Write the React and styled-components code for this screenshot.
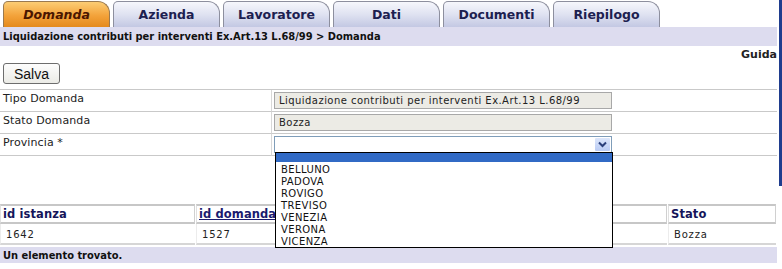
import React from "react";
import styled, { createGlobalStyle } from "styled-components";

const Global = createGlobalStyle`
  html, body { margin: 0; padding: 0; background: #fff; }
  body { font-family: "DejaVu Sans", Verdana, sans-serif; color: #111; }
`;

const Page = styled.div`
  position: relative;
  width: 782px;
  height: 269px;
  overflow: hidden;
  background: #fff;
`;

const TopArea = styled.div`
  border-right: 3px solid #1f3d8e;
  padding-right: 2px;
  padding-bottom: 30px;
`;

const TabBar = styled.div`
  display: flex;
  gap: 3px;
  padding: 1px 0 0 3px;
  height: 26px;
`;

const Tab = styled.div`
  width: 105px;
  height: 25px;
  border: 1px solid ${p => (p.$active ? "#9a7a50" : "#8d8f9e")};
  border-bottom: none;
  border-radius: 5px 12px 0 0;
  background: ${p =>
    p.$active
      ? "linear-gradient(#fccd74, #f3a23a 55%, #e48a1c)"
      : "linear-gradient(#f6f7fc, #dfe2f1 50%, #c3c8e3)"};
  display: flex;
  align-items: center;
  justify-content: center;
  font-weight: bold;
  font-size: 12.5px;
  font-style: ${p => (p.$active ? "italic" : "normal")};
  color: ${p => (p.$active ? "#4a1600" : "#1c2050")};
`;

const Breadcrumb = styled.div`
  height: 19px;
  background: #dddcef;
  display: flex;
  align-items: center;
  padding-left: 3px;
  font-family: "DejaVu Sans Condensed", "DejaVu Sans", sans-serif;
  font-weight: bold;
  font-size: 11px;
  color: #111;
`;

const HelpRow = styled.div`
  height: 16px;
  display: flex;
  justify-content: flex-end;
  align-items: center;
  font-weight: bold;
  font-size: 11px;
  color: #222;
`;

const Toolbar = styled.div`
  padding: 0 0 0 3px;
  height: 26px;
`;

const Button = styled.button`
  display: block;
  width: 57px;
  height: 21px;
  margin-top: 1px;
  border: 1px solid #6d6d6d;
  border-radius: 3px;
  background: linear-gradient(#fdfdfd, #ebebe6);
  font-family: "Liberation Sans", Arial, sans-serif;
  font-size: 14px;
  color: #111;
  padding: 0;
`;

const Form = styled.div`
  display: grid;
  grid-template-columns: 272px 1fr;
  border-top: 1px solid #c9c9c9;
`;

const Label = styled.div`
  border-bottom: 1px solid #c9c9c9;
  border-right: 1px solid #d8d8d8;
  padding: 2px 0 0 3px;
  box-sizing: border-box;
  height: 22px;
  font-size: 11px;
  letter-spacing: 0.1px;
  color: #222;
`;

const Field = styled.div`
  height: 22px;
  box-sizing: border-box;
  border-bottom: 1px solid #c9c9c9;
  padding: 2px 0 0 2px;
`;

const ReadOnly = styled.div`
  width: 338px;
  height: 17px;
  box-sizing: border-box;
  background: #ecebe5;
  border: 1px solid #a8a8a8;
  font-size: 10px;
  letter-spacing: 0.45px;
  padding: 2px 0 0 4px;
  color: #222;
`;

const Select = styled.div`
  width: 338px;
  height: 17px;
  box-sizing: border-box;
  background: #fff;
  border: 1px solid #7f9db9;
  display: flex;
  justify-content: flex-end;
  padding: 1px;
`;

const ArrowBtn = styled.div`
  width: 15px;
  height: 13px;
  background: linear-gradient(#dce6fb, #b9cbf4);
  border-radius: 1px;
  display: flex;
  align-items: center;
  justify-content: center;
`;

const ListBox = styled.div`
  position: absolute;
  left: 275px;
  top: 152px;
  width: 338px;
  height: 96px;
  box-sizing: border-box;
  border: 1px solid #000;
  background: #fff;
  overflow: hidden;
  z-index: 5;
`;

const Option = styled.div`
  height: ${p => (p.$selected ? "9px" : "12px")};
  margin-bottom: ${p => (p.$selected ? "2px" : "0")};
  background: ${p => (p.$selected ? "#316ac5" : "transparent")};
  padding-left: 5px;
  font-size: 10px;
  line-height: 12px;
  letter-spacing: 0.4px;
  color: #111;
`;

const Results = styled.table`
  width: 778px;
  border-collapse: separate;
  border-spacing: 1px 0;
  margin: 18px 0 0 -1px;
`;

const Th = styled.th`
  height: 16px;
  border-top: 2px solid #c7c7c7;
  border-bottom: 2px solid #c7c7c7;
  border-left: 1px solid #e0e0e0;
  border-right: 1px solid #d0d0d0;
  text-align: left;
  padding: 0 0 0 2px;
  font-size: 11.5px;
  letter-spacing: 0.1px;
  font-weight: bold;
  color: #15155a;
  width: ${p => p.$w}px;
`;

const HeaderLink = styled.span`
  text-decoration: underline;
  color: #1a1a6e;
`;

const Td = styled.td`
  height: 18px;
  border-bottom: 2px solid #d6d6d6;
  border-left: 1px solid #ececec;
  padding: 1px 0 0 5px;
  font-size: 10px;
  letter-spacing: 0.8px;
  color: #222;
`;

const Footer = styled.div`
  margin-top: 2px;
  width: 777px;
  height: 16px;
  background: #dddcef;
  display: flex;
  align-items: center;
  padding-left: 3px;
  box-sizing: border-box;
  font-family: "DejaVu Sans Condensed", "DejaVu Sans", sans-serif;
  font-weight: bold;
  font-size: 11px;
  color: #111;
`;

const tabs = ["Domanda", "Azienda", "Lavoratore", "Dati", "Documenti", "Riepilogo"];
const province = ["BELLUNO", "PADOVA", "ROVIGO", "TREVISO", "VENEZIA", "VERONA", "VICENZA"];

export default function App() {
  return (
    <Page>
      <Global />
      <TopArea>
        <TabBar>
          {tabs.map((t, i) => (
            <Tab key={t} $active={i === 0}>{t}</Tab>
          ))}
        </TabBar>
        <Breadcrumb>Liquidazione contributi per interventi Ex.Art.13 L.68/99 &gt; Domanda</Breadcrumb>
        <HelpRow>Guida</HelpRow>
        <Toolbar>
          <Button>Salva</Button>
        </Toolbar>
        <Form>
          <Label>Tipo Domanda</Label>
          <Field>
            <ReadOnly>Liquidazione contributi per interventi Ex.Art.13 L.68/99</ReadOnly>
          </Field>
          <Label>Stato Domanda</Label>
          <Field>
            <ReadOnly>Bozza</ReadOnly>
          </Field>
          <Label>Provincia *</Label>
          <Field>
            <Select>
              <ArrowBtn>
                <svg width="9" height="7" viewBox="0 0 9 7">
                  <path d="M1 1.5 L4.5 5 L8 1.5" fill="none" stroke="#2a3f7a" strokeWidth="2" />
                </svg>
              </ArrowBtn>
            </Select>
          </Field>
        </Form>
      </TopArea>
      <ListBox>
        <Option $selected />
        {province.map(p => (
          <Option key={p}>{p}</Option>
        ))}
      </ListBox>
      <Results>
        <thead>
          <tr>
            <Th $w={191}>id istanza</Th>
            <Th $w={252}><HeaderLink>id domanda</HeaderLink></Th>
            <Th $w={210}>Data Domanda</Th>
            <Th>Stato</Th>
          </tr>
        </thead>
        <tbody>
          <tr>
            <Td>1642</Td>
            <Td>1527</Td>
            <Td>12/03/2010</Td>
            <Td>Bozza</Td>
          </tr>
        </tbody>
      </Results>
      <Footer>Un elemento trovato.</Footer>
    </Page>
  );
}
